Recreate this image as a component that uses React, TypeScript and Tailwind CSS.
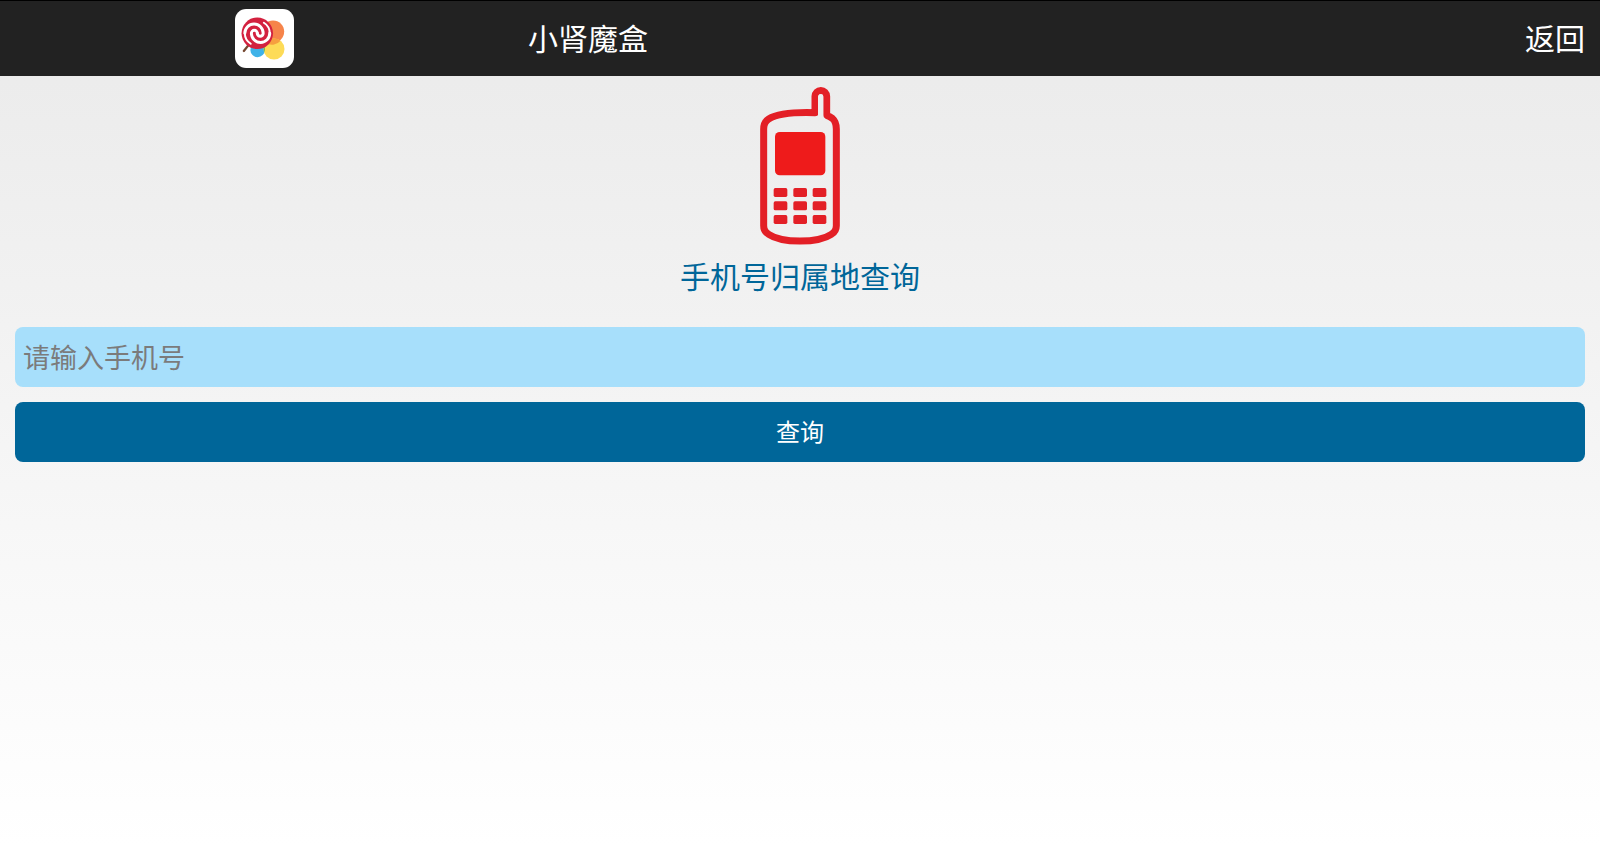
import { useState } from "react";

const AppLogo = () => (
  <svg width="59" height="59" viewBox="0 0 180 180" aria-hidden="true">
    <rect width="180" height="180" rx="34" fill="#fff" />
    <circle cx="116" cy="69" r="34" fill="#f6844a" />
    <circle cx="69" cy="125" r="22" fill="#3fb2e8" />
    <circle cx="119" cy="122" r="32" fill="#fddb57" />
    <path d="M89 112 A32 32 0 0 0 89 133 A22 22 0 0 0 91 119 Z" fill="#5cb85c" />
    <path d="M93 103 A32 32 0 0 1 139 97 A34 34 0 0 1 93 103 Z" fill="#f6a03f" />
    <path d="M43 108 L27 128" stroke="#74462f" strokeWidth="7" strokeLinecap="round" />
    <circle cx="68" cy="74" r="48" fill="#d3213f" />
    <g fill="none" stroke="#fff" strokeWidth="9" strokeLinecap="round">
      <path d="M68 74 A9 9 0 0 0 50 74 A28 28 0 0 0 106 74" />
      <path d="M106 74 A38 38 0 0 0 88 42" strokeWidth="6" />
      <path d="M68 74 A9 9 0 0 0 86 74 A28 28 0 0 0 30 74" />
      <path d="M30 74 A38 38 0 0 0 48 106" strokeWidth="6" />
    </g>
  </svg>
);

const PhoneIcon = () => (
  <svg width="80" height="160" viewBox="60 45 240 480" aria-hidden="true">
    <path
      d="M225 125 C162 123 110 129 86 144 Q71 153 71 174 V464 Q71 481 86 490 C126 517 234 517 274 490 Q289 481 289 464 V174 Q289 152 277 142 Q269 136 260 133 V76 A17 17 0 0 0 225 76 Z"
      fill="none"
      stroke="#e31f26"
      strokeWidth="21"
      strokeLinejoin="round"
    />
    <path d="M242 78 V142" stroke="#ededed" strokeWidth="16" strokeLinecap="round" />
    <rect x="105" y="183" width="151" height="130" rx="14" fill="#ee1b1b" />
    {[351, 391, 432].map((y) =>
      [101, 160, 218].map((x) => (
        <rect key={`${x}-${y}`} x={x} y={y} width="41" height="27" rx="5" fill="#e31f26" />
      ))
    )}
  </svg>
);

const App = () => {
  const [phone, setPhone] = useState("");

  return (
    <div className="min-h-screen bg-linear-to-b from-[#eaeaea] to-white font-['Noto_Sans','Noto_Sans_CJK_SC',sans-serif]">
      <header className="flex h-[76px] items-center border-t border-black bg-[#222] text-[30px] leading-[46px] text-white">
        <div className="flex w-[33%] justify-center">
          <AppLogo />
        </div>
        <h1>小肾魔盒</h1>
        <a href="#" className="ml-auto pr-[15px]">
          返回
        </a>
      </header>
      <main className="px-[15px] pt-[10px]">
        <div className="flex flex-col items-center">
          <PhoneIcon />
          <h2 className="mt-2 text-[30px] leading-[46px] text-[#069]">
            手机号归属地查询
          </h2>
        </div>
        <form onSubmit={(e) => e.preventDefault()} className="mt-[27px] space-y-[15px]">
          <input
            type="tel"
            aria-label="手机号"
            placeholder="请输入手机号"
            value={phone}
            onChange={(e) => setPhone(e.target.value)}
            className="block h-[60px] w-full rounded-lg bg-[#a7dffb] px-2 text-[27px] leading-[40px] text-[#333] outline-none placeholder:text-[#7b7b7b]"
          />
          <button
            type="submit"
            className="block h-[60px] w-full cursor-pointer rounded-lg bg-[#069] text-2xl text-white">
            查询
          </button>
        </form>
      </main>
    </div>
  );
};

export default App;
